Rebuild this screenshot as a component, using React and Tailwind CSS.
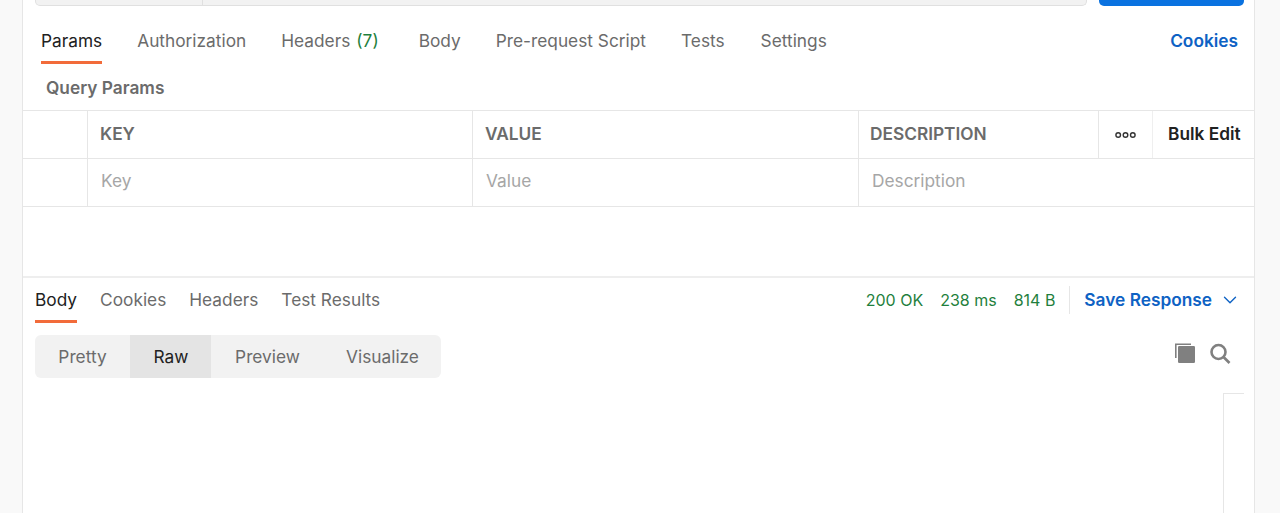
import React from 'react'
import { ChevronDown } from 'lucide-react'

const requestTabs = [
  { label: 'Authorization', cls: 'ml-[35px]' },
  { label: 'Headers', cls: 'ml-[35px]', count: '(7)' },
  { label: 'Body', cls: 'ml-[40px]' },
  { label: 'Pre-request Script', cls: 'ml-[35px]' },
  { label: 'Tests', cls: 'ml-[35px]' },
  { label: 'Settings', cls: 'ml-[36px]' },
]

const responseTabs = ['Cookies', 'Headers', 'Test Results']

function ActiveTab({ children }) {
  return (
    <div className="relative text-[#212121]">
      {children}
      <div className="absolute left-0 right-0 top-[33px] h-[3px] bg-[#f26b3a]" />
    </div>
  )
}

export default function App() {
  return (
    <div className="flex h-[513px] w-[1280px] overflow-hidden bg-[#f9f9f9] font-['Inter',sans-serif] text-[17.3px] text-[#6b6b6b]">
      <div className="ml-[22px] h-full w-[1233px] border-x border-[#e6e6e6] bg-white">
        {/* Url bar, cut off by the top of the window */}
        <div className="flex h-[6px] pl-[12px] pr-[10px]">
          <div className="flex w-[1052px] rounded-b-[5px] border-b border-x border-[#e0e0e0] bg-[#f2f2f2]">
            <div className="w-[167px] border-r border-[#e0e0e0]" />
          </div>
          <div className="ml-[12px] w-[145px] rounded-b-[5px] bg-[#0a72e0]" />
        </div>

        {/* Request tabs */}
        <div className="flex h-[50px] items-center pl-[18px] pr-[16px] pt-[19px]">
          <ActiveTab>Params</ActiveTab>
          {requestTabs.map((t) => (
            <div key={t.label} className={t.cls}>
              {t.label}
              {t.count && <span className="ml-[6px] text-[#1f7f3d]">{t.count}</span>}
            </div>
          ))}
          <div className="ml-auto font-semibold text-[#0e62c4]">Cookies</div>
        </div>

        <div className="flex h-[54px] items-center pl-[23px] pt-[10px] font-semibold text-[#6b6b6b]">Query Params</div>

        {/* Params table */}
        <div className="flex h-[49px] border-y border-[#e6e6e6] font-semibold">
          <div className="w-[65px] border-r border-[#e6e6e6]" />
          <div className="flex w-[385px] items-center border-r border-[#e6e6e6] pb-[2px] pl-[12px]">KEY</div>
          <div className="flex w-[386px] items-center border-r border-[#e6e6e6] pb-[2px] pl-[12px]">VALUE</div>
          <div className="flex w-[240px] items-center border-r border-[#e6e6e6] pb-[2px] pl-[11px]">DESCRIPTION</div>
          <div className="flex w-[54px] items-center justify-center border-r border-[#efefef] text-[#212121]">
            <svg width="21" height="8" viewBox="0 0 21 8" fill="none" stroke="#333" strokeWidth="1.4">
              <circle cx="3.2" cy="4" r="2.3" />
              <circle cx="10.5" cy="4" r="2.3" />
              <circle cx="17.8" cy="4" r="2.3" />
            </svg>
          </div>
          <div className="flex flex-1 items-center pb-[2px] pl-[15px] text-[#212121]">Bulk Edit</div>
        </div>
        <div className="flex h-[48px] border-b border-[#e6e6e6] text-[#a6a6a6]">
          <div className="w-[65px] border-r border-[#e6e6e6]" />
          <div className="flex w-[385px] items-center border-r border-[#e6e6e6] pb-[3px] pl-[13px]">Key</div>
          <div className="flex w-[386px] items-center border-r border-[#e6e6e6] pb-[3px] pl-[13px]">Value</div>
          <div className="flex flex-1 items-center pb-[3px] pl-[13px]">Description</div>
        </div>

        {/* Response */}
        <div className="mt-[69px] flex h-[48px] items-center border-t-2 border-[#eeeeee] pb-[2px] pl-[12px] pr-[13px]">
          <ActiveTab>Body</ActiveTab>
          {responseTabs.map((t) => (
            <div key={t} className="ml-[23px]">{t}</div>
          ))}
          <div className="ml-auto flex items-center text-[16px] text-[#1f7f3d]">
            <span>200 OK</span>
            <span className="ml-[17px]">238 ms</span>
            <span className="ml-[17px]">814 B</span>
          </div>
          <div className="ml-[14px] h-[28px] w-px bg-[#e6e6e6]" />
          <div className="ml-[14px] font-semibold text-[#0e62c4]">Save Response</div>
          <ChevronDown className="ml-[7px] text-[#0e62c4]" size={22} strokeWidth={1.5} />
        </div>

        <div className="mt-[11px] flex items-start pl-[12px] pr-[10px]">
          <div className="flex h-[43px] items-stretch overflow-hidden rounded-[6px] bg-[#f2f2f2]">
            <div className="flex w-[95px] items-center justify-center">Pretty</div>
            <div className="flex w-[81px] items-center justify-center bg-[#e4e4e4] pl-[1px] text-[#212121]">Raw</div>
            <div className="flex w-[113px] items-center justify-center">Preview</div>
            <div className="flex w-[117px] items-center justify-center">Visualize</div>
          </div>
          <div className="ml-auto mr-[13px] mt-[6px] flex items-center gap-[13px]">
            <svg width="22" height="23" viewBox="0 0 22 23" fill="#808080">
              <path d="M1 2.5h16v1.6H2.6V17H1z" />
              <rect x="4" y="5" width="17" height="17" rx="1.2" />
            </svg>
            <svg width="22" height="23" viewBox="0 0 22 23" fill="none" stroke="#808080" strokeWidth="2.6">
              <circle cx="9.5" cy="11" r="7" />
              <path d="M14.5 16L20.5 22" />
            </svg>
          </div>
        </div>

        <div className="mt-[15px] ml-auto mr-[10px] h-[130px] w-[21px] border-l border-t border-[#e6e6e6]" />
      </div>
    </div>
  )
}
